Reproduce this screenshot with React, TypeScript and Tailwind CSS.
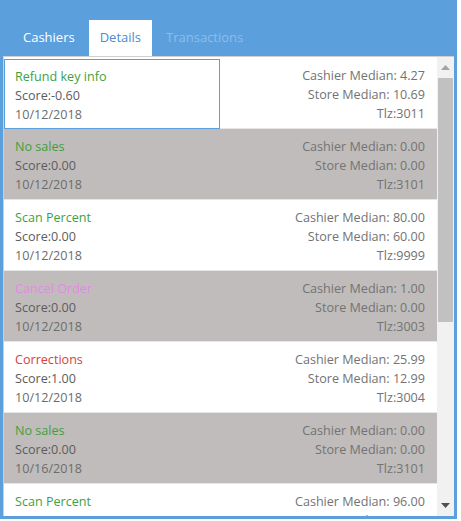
import React from "react";

interface Item {
  title: string;
  color: string;
  score: string;
  date: string;
  cashier: string;
  store: string;
  tlz: string;
}

const items: Item[] = [
  { title: "Refund key info", color: "text-[#3f9f3f]", score: "-0.60", date: "10/12/2018", cashier: "4.27", store: "10.69", tlz: "3011" },
  { title: "No sales", color: "text-[#3f9f3f]", score: "0.00", date: "10/12/2018", cashier: "0.00", store: "0.00", tlz: "3101" },
  { title: "Scan Percent", color: "text-[#3f9f3f]", score: "0.00", date: "10/12/2018", cashier: "80.00", store: "60.00", tlz: "9999" },
  { title: "Cancel Order", color: "text-[#e28ae2]", score: "0.00", date: "10/12/2018", cashier: "1.00", store: "0.00", tlz: "3003" },
  { title: "Corrections", color: "text-[#d6403c]", score: "1.00", date: "10/12/2018", cashier: "25.99", store: "12.99", tlz: "3004" },
  { title: "No sales", color: "text-[#3f9f3f]", score: "0.00", date: "10/16/2018", cashier: "0.00", store: "0.00", tlz: "3101" },
  { title: "Scan Percent", color: "text-[#3f9f3f]", score: "0.00", date: "10/16/2018", cashier: "96.00", store: "90.00", tlz: "9999" },
];

function Row({ item, index }: { item: Item; index: number }) {
  const shaded = index % 2 === 1;
  const focused = index === 0;
  return (
    <div
      className={
        "flex h-[71px] shrink-0 border-b border-[#e6e6e6] " +
        (shaded ? "bg-[#c0bcbb]" : "bg-white")
      }
    >
      <div
        className={
          "flex w-[216px] flex-col leading-[19px] " +
          (focused ? "mt-[1px] mb-[-1px] border border-[#5b9fdd] pl-[10px] pt-[7px]" : "pl-[11px] pt-[8px]")
        }
      >
        <span className={item.color}>{item.title}</span>
        <span className="text-[#5c5c5c]">Score:{item.score}</span>
        <span className="text-[#6c6c6c]">{item.date}</span>
      </div>
      <div className="flex flex-1 flex-col items-end pr-[12px] pt-[8px] leading-[19px] text-[#737373]">
        <span>Cashier Median: {item.cashier}</span>
        <span>Store Median: {item.store}</span>
        <span>Tlz:{item.tlz}</span>
      </div>
    </div>
  );
}

export default function App() {
  return (
    <div
      className="w-[457px] bg-[#5b9fdd] px-[3px] pb-[3px]"
      style={{ fontFamily: '"Open Sans", "Liberation Sans", sans-serif' }}
    >
      <div className="flex h-[56px] items-end pl-[6px] text-[13px]">
        <div className="flex h-[36px] items-center px-[14px] text-white">Cashiers</div>
        <div className="flex h-[36px] items-center bg-white px-[11px] text-[#4a8ccc]">Details</div>
        <div className="flex h-[36px] items-center px-[14px] text-[#8dbde8]">Transactions</div>
      </div>
      <div className="flex h-[460px] border-t border-l border-[#cfcfcf] bg-white text-[12.6px]">
        <div className="flex flex-1 flex-col overflow-hidden pt-[1px]">
          {items.map((item, i) => (
            <Row key={i} item={item} index={i} />
          ))}
        </div>
        <div className="flex w-[17px] flex-col items-center bg-[#f1f1f1]">
          <div className="flex h-[21px] w-full items-center justify-center">
            <svg width="9" height="5" viewBox="0 0 9 5">
              <path d="M0 5 L4.5 0 L9 5 Z" fill="#a3a3a3" />
            </svg>
          </div>
          <div className="mx-[1px] h-[244px] w-[15px] bg-[#c1c1c1]" />
          <div className="flex-1" />
          <div className="flex h-[21px] w-full items-center justify-center">
            <svg width="9" height="5" viewBox="0 0 9 5">
              <path d="M0 0 L9 0 L4.5 5 Z" fill="#505050" />
            </svg>
          </div>
        </div>
      </div>
    </div>
  );
}
